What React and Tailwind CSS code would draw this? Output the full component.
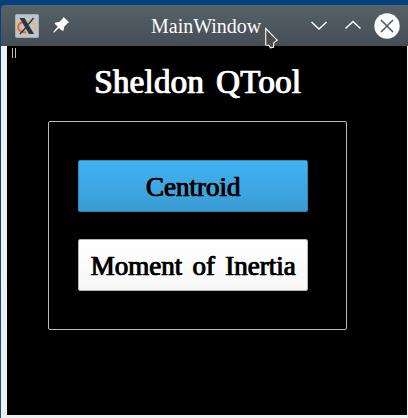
function TitleBar() {
  return (
    <header className="relative flex h-[41px] shrink-0 items-center rounded-tl-[4px] bg-linear-to-b from-[#566168] to-[#454e54]">
      <svg className="ml-[14px]" width="24" height="24" viewBox="0 0 24 24">
        <rect x="0.5" y="0.5" width="23" height="23" rx="1" fill="#bdc5ca" stroke="#a5afb5" />
        <ellipse cx="12.3" cy="13" rx="9" ry="5.8" fill="none" stroke="#efb566" strokeWidth="1.4" />
        <path d="M11 7.4C0.5 8.3 0.5 17.7 11 18.6" fill="none" stroke="#f26322" strokeWidth="2" />
        <path d="M4.5 4H9.5L19 20H14Z" fill="#30363a" />
        <path d="M18.5 4L13.3 10.5M11 13.5L5 20" stroke="#30363a" strokeWidth="1.4" />
      </svg>
      <svg className="mb-[2px] ml-[13px]" width="18" height="18" viewBox="0 0 18 18" fill="#fcfcfc">
        <path d="M11.6 0.9L17.1 6.2L15.4 7.6L12.2 10.8L11.7 14.4L9.7 14.6L7 12L2 16.8L1.2 16L5.7 10.6L2.6 7.8L3.4 6.4L7.2 6.1L10.4 3Z" />
      </svg>
      <span className="ml-[81px] text-[20px] leading-[22px] whitespace-nowrap text-[#fcfcfc]">
        MainWindow
      </span>
      <div className="ml-auto flex items-center">
        <svg width="18" height="12" viewBox="0 0 18 12" fill="none" stroke="#fcfcfc" strokeWidth="1.5">
          <path d="M1.5 2L9 9L16.5 2" />
        </svg>
        <svg className="ml-4" width="18" height="12" viewBox="0 0 18 12" fill="none" stroke="#fcfcfc" strokeWidth="1.5">
          <path d="M1.5 8.5L9 1.5L16.5 8.5" />
        </svg>
        <svg className="mr-[8px] ml-[12px]" width="26" height="26" viewBox="0 0 26 26">
          <circle cx="13" cy="13" r="12.7" fill="#fcfcfc" />
          <path d="M7 7L19 19M19 7L7 19" stroke="#4b555b" strokeWidth="1.5" />
        </svg>
      </div>
      <svg className="absolute top-[22px] left-[264px] z-10" width="14" height="23" viewBox="0 0 14 23">
        <path d="M0.7 1.5L12.2 13.2L8.8 15.8L8.5 20.2L5.3 20.8L4 18.2L0.7 18Z" fill="#4d4d4d" stroke="#fcfcfc" strokeWidth="1.1" />
      </svg>
    </header>
  );
}

export default function App() {
  return (
    <div className="h-[418px] w-[408px] overflow-hidden bg-linear-to-b from-[#04417f] via-[#0a467f] to-[#185580] pt-[5px] pl-px font-['Liberation_Serif',serif]">
      <div className="flex h-[413px] flex-col">
        <TitleBar />
        <main className="flex-1 bg-[#f0f0f0] pr-px pb-[3px] pl-[6px]">
          <div className="flex h-full flex-col bg-black">
            <div className="ml-[5px] flex h-[12px] shrink-0 items-end gap-[2px]">
              <i className="h-[10px] w-px bg-[#bbb]" />
              <i className="h-[10px] w-px bg-[#bbb]" />
            </div>
            <h1 className="mt-[4px] ml-[87px] h-[40px] text-[33px] leading-[40px] tracking-[0.24px] [word-spacing:3.5px] whitespace-nowrap text-white [-webkit-text-stroke:0.5px_white] [text-shadow:0.9px_0_0_white]">
              Sheldon QTool
            </h1>
            <section className="mt-[19px] ml-[41px] flex h-[209px] w-[299px] flex-col gap-[27px] rounded-[2px] border border-[#bcbcbc] pt-[38px] pl-[29px]">
              <button className="h-[52px] w-[230px] rounded-[2px] border border-[#2e87b8] bg-linear-to-b from-[#40b3f3] to-[#3a9cd2] pt-[2px] text-[27px] leading-[48px] whitespace-nowrap text-black [-webkit-text-stroke:0.6px_black] [text-shadow:0.8px_0_0_black]">
                Centroid
              </button>
              <button className="h-[52px] w-[230px] rounded-[2px] border border-[#b5b5b5] bg-linear-to-b from-white to-[#f7f7f7] pt-[2px] text-[27px] leading-[48px] [word-spacing:3.5px] whitespace-nowrap text-black [-webkit-text-stroke:0.6px_black] [text-shadow:0.8px_0_0_black]">
                Moment of Inertia
              </button>
            </section>
          </div>
        </main>
      </div>
    </div>
  );
}
